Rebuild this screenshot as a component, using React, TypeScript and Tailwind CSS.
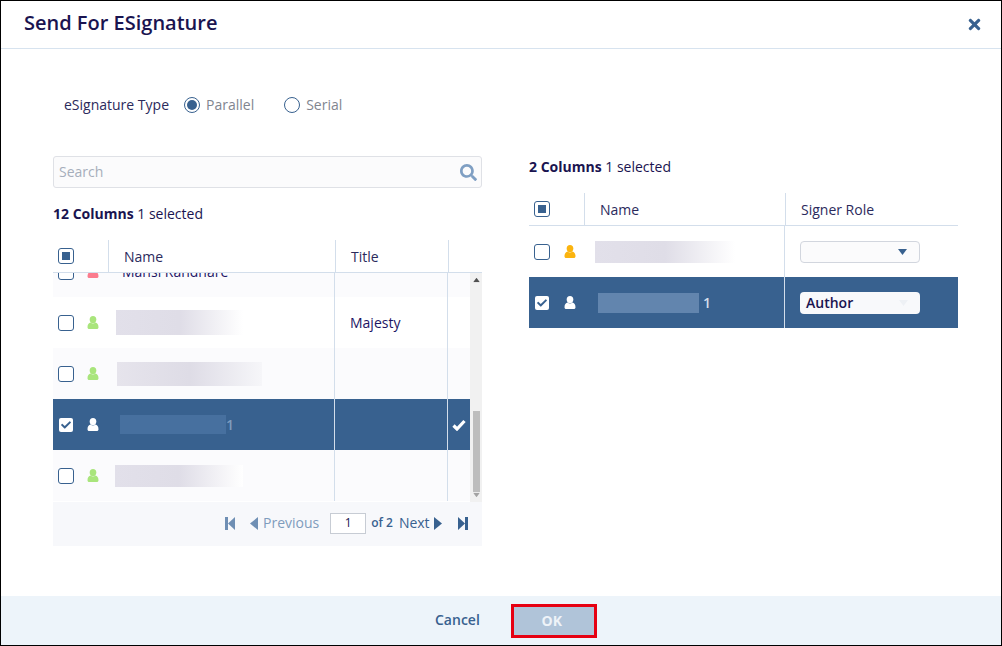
import { FaCheck, FaSearch, FaTimes } from 'react-icons/fa'

const User = ({ className }: { className: string }) => (
  <svg width="12" height="13" viewBox="0 0 12 13" className={`shrink-0 fill-current ${className}`}>
    <ellipse cx="6" cy="3.6" rx="3.3" ry="3.6" />
    <path d="M0.5 11.2C0.5 8.6 1.8 7 3.6 6.6 4.3 7.2 5.1 7.5 6 7.5S7.7 7.2 8.4 6.6C10.200 7 11.500 8.600 11.500 11.200 11.500 12.300 10.800 13 9.800 13H2.200C1.200 13 0.500 12.300 0.500 11.200Z" />
  </svg>
)

const Tri = ({ dir, className }: { dir: 'left' | 'right' | 'down' | 'up'; className: string }) => {
  if (dir === 'left' || dir === 'right') {
    return (
      <svg width="8" height="13" viewBox="0 0 8 13" className={`shrink-0 fill-current ${className}`}>
        <path d={dir === 'left' ? 'M8 0V13L0 6.500Z' : 'M0 0V13L8 6.500Z'} />
      </svg>
    )
  }
  return (
    <svg width="9" height="6" viewBox="0 0 9 6" className={`shrink-0 fill-current ${className}`}>
      <path d={dir === 'down' ? 'M0 0H9L4.500 6Z' : 'M0 6H9L4.500 0Z'} />
    </svg>
  )
}

const Step = ({ dir, className }: { dir: 'back' | 'fwd'; className: string }) => (
  <svg width="10" height="13" viewBox="0 0 10 13" className={`shrink-0 fill-current ${className}`}>
    <path d={dir === 'back' ? 'M0 0H3V13H0ZM10 0V13L3 6.500Z' : 'M10 0H7V13H10ZM0 0V13L7 6.500Z'} />
  </svg>
)

const Box = ({ state }: { state: 'off' | 'on' | 'mixed' }) => {
  if (state === 'on') {
    return (
      <span className="ml-px flex h-[14px] w-[14px] shrink-0 items-center justify-center rounded-[2px] bg-white text-[#38618f]">
        <FaCheck size={10} />
      </span>
    )
  }
  return (
    <span className="flex h-4 w-4 shrink-0 items-center justify-center rounded-[3px] border border-[#38618f] bg-white">
      {state === 'mixed' && <span className="h-2 w-2 bg-[#38618f]" />}
    </span>
  )
}

const Blur = ({ width, height, ml, tone }: { width: number; height: number; ml: number; tone: 'grey' | 'fade' | 'blue' | 'blue2' }) => {
  const bg = {
    grey: 'bg-gradient-to-r from-[#e6e4ec] via-[#dedce6] to-[#f6f6f9]',
    fade: 'bg-gradient-to-r from-[#e2e0ea] via-[#dfdde7] to-white',
    blue: 'bg-[#47709f]',
    blue2: 'bg-[#6285ae]',
  }[tone]
  return <div className={bg} style={{ width, height, marginLeft: ml }} />
}

const Row = ({
  bg,
  icon,
  box,
  children,
  title,
  mark,
}: {
  bg: string
  icon: string
  box: 'off' | 'on'
  children: React.ReactNode
  title?: string
  mark?: boolean
}) => (
  <div className={`flex h-[51px] ${bg}`}>
    <div className={`flex w-[55px] shrink-0 items-center pl-[5px] ${box === 'on' ? 'gap-[14px]' : 'gap-[13px]'}`}>
      <Box state={box} />
      <User className={icon} />
    </div>
    <div className="flex w-[226px] shrink-0 items-center overflow-hidden">{children}</div>
    <div className="flex w-[113px] shrink-0 items-center border-l border-[#d3deeb] pl-[15px] text-sm text-[#1c1464]">{title}</div>
    <div className="flex flex-1 items-center justify-center border-l border-[#d3deeb]">
      {mark && (
        <svg width="14" height="12" viewBox="0 0 14 12" fill="none" stroke="white" strokeWidth="3.200">
          <path d="M1.500 6.500 5 10 12.500 2" />
        </svg>
      )}
    </div>
  </div>
)

export default function App() {
  return (
    <div className="flex h-[646px] w-[1002px] flex-col border border-black bg-white font-['Open_Sans',sans-serif]">
      <header className="flex h-12 shrink-0 items-center justify-between border-b border-[#d7e3ef] pb-1 pl-[23px] pr-[18px]">
        <h1 className="text-xl font-semibold text-[#1a1450]">Send For ESignature</h1>
        <FaTimes size={17} className="mt-1 text-[#38618f]" />
      </header>

      <main className="flex-1">
        <div className="mt-[45px] flex h-[22px] items-center pl-[63px] text-sm">
          <span className="text-[#2b2a5c]">eSignature Type</span>
          <span className="ml-[15px] flex h-4 w-4 items-center justify-center rounded-full border border-[#38618f]">
            <span className="h-2.5 w-2.5 rounded-full bg-[#38618f]" />
          </span>
          <span className="ml-[6px] text-[#81858f]">Parallel</span>
          <span className="ml-[30px] h-4 w-4 rounded-full border border-[#38618f]" />
          <span className="ml-[6px] text-[#81858f]">Serial</span>
        </div>

        <div className="mt-10 flex pl-[52px]">
          <section className="w-[429px]">
            <div className="flex h-8 items-center justify-between rounded-[3px] border border-[#dfe1e6] bg-[#fbfbfc] pl-[5px] pr-1">
              <span className="text-sm text-[#a6aebb]">Search</span>
              <FaSearch size={17} className="text-[#7f9fc3]" />
            </div>
            <div className="mt-4 h-5 text-sm leading-5 text-[#1a1450]">
              <b>12 Columns</b> 1 selected
            </div>

            <div className="mt-4 flex h-[33px] border-b border-[#d3deeb] text-sm text-[#2b2a5c]">
              <div className="flex w-[55px] shrink-0 items-center pl-[5px]">
                <Box state="mixed" />
              </div>
              <div className="flex w-[227px] shrink-0 items-center border-l border-[#d3deeb] pl-[15px] pt-0.5">Name</div>
              <div className="flex w-[113px] shrink-0 items-center border-l border-[#d3deeb] pl-[15px] pt-0.5">Title</div>
              <div className="flex-1 border-l border-[#d3deeb]" />
            </div>

            <div className="flex h-[229px]">
              <div className="w-[417px] overflow-hidden">
                <div className="-mt-[27px]">
                  <Row bg="bg-[#fbfbfd]" icon="text-[#fb7c8e]" box="off">
                    <span className="ml-[14px] text-sm text-[#1c1464]">Mansi Randhare</span>
                  </Row>
                  <Row bg="bg-white" icon="text-[#a9e57c]" box="off" title="Majesty">
                    <Blur width={127} height={25} ml={8} tone="fade" />
                  </Row>
                  <Row bg="bg-[#fbfbfd]" icon="text-[#a9e57c]" box="off">
                    <Blur width={145} height={24} ml={9} tone="grey" />
                  </Row>
                  <Row bg="bg-[#38618f]" icon="text-white" box="on" mark>
                    <Blur width={106} height={19} ml={12} tone="blue" />
                    <span className="text-sm font-semibold text-[#7f9cbd]">1</span>
                  </Row>
                  <Row bg="bg-[#fbfbfd]" icon="text-[#a9e57c]" box="off">
                    <Blur width={128} height={22} ml={7} tone="fade" />
                  </Row>
                </div>
              </div>
              <div className="flex flex-1 flex-col items-center justify-between bg-[#f1f1f1] py-1">
                <Tri dir="up" className="scale-75 text-[#505050]" />
                <div className="mt-[128px] w-[7px] flex-1 bg-[#bdbdbd]" />
                <Tri dir="down" className="scale-75 text-[#a3a3a3]" />
              </div>
            </div>

            <div className="flex h-[44px] items-center bg-[#f7f8fb] pb-0.5 text-sm">
              <Step dir="back" className="ml-[172px] text-[#6f8fb4]" />
              <Tri dir="left" className="ml-[15px] text-[#6f8fb4]" />
              <span className="ml-[5px] text-[#7f9cbd]">Previous</span>
              <span className="ml-[11px] flex h-[21px] w-9 items-center justify-center border border-[#c7ccd4] bg-white text-xs text-[#1a1450]">1</span>
              <span className="ml-[5px] text-xs font-semibold text-[#38618f]">of 2</span>
              <span className="ml-[6px] text-[#38618f]">Next</span>
              <Tri dir="right" className="ml-1 text-[#38618f]" />
              <Step dir="fwd" className="ml-4 text-[#38618f]" />
            </div>
          </section>

          <section className="ml-[47px] w-[429px]">
            <div className="h-[21px] pt-px text-sm leading-5 text-[#1a1450]">
              <b>2 Columns</b> 1 selected
            </div>
            <div className="mt-4 flex h-[33px] border-b border-[#d3deeb] text-sm text-[#2b2a5c]">
              <div className="flex w-[55px] shrink-0 items-center pl-[5px]">
                <Box state="mixed" />
              </div>
              <div className="flex w-[201px] shrink-0 items-center border-l border-[#d3deeb] pl-[15px] pt-0.5">Name</div>
              <div className="flex flex-1 items-center border-l border-[#d3deeb] pl-[15px] pt-0.5">Signer Role</div>
            </div>
            <div className="flex h-[51px] bg-white">
              <div className="flex w-[55px] shrink-0 items-center gap-[14px] pl-[5px]">
                <Box state="off" />
                <User className="text-[#fbb40f]" />
              </div>
              <div className="flex w-[200px] shrink-0 items-center overflow-hidden">
                <Blur width={140} height={22} ml={11} tone="fade" />
              </div>
              <div className="flex flex-1 items-center border-l border-[#d3deeb] pl-[15px]">
                <div className="flex h-[22px] w-[120px] items-center justify-end rounded-[4px] border border-[#d2d6de] bg-[#fbfbfc] pr-3">
                  <Tri dir="down" className="text-[#38618f]" />
                </div>
              </div>
            </div>
            <div className="flex h-[51px] bg-[#38618f]">
              <div className="flex w-[55px] shrink-0 items-center gap-[15px] pl-[5px]">
                <Box state="on" />
                <User className="text-white" />
              </div>
              <div className="flex w-[200px] shrink-0 items-center overflow-hidden">
                <Blur width={101} height={20} ml={14} tone="blue2" />
                <span className="ml-1 text-sm font-semibold text-[#d4deea]">1</span>
              </div>
              <div className="flex flex-1 items-center border-l border-[#d3deeb] pl-[15px]">
                <div className="flex h-[22px] w-[120px] items-center justify-between rounded-[4px] bg-[#f8f9fb] pl-[6px] pr-3 text-sm font-semibold text-[#1a1450]">
                  Author
                  <Tri dir="down" className="text-[#eef1f5]" />
                </div>
              </div>
            </div>
          </section>
        </div>
      </main>

      <footer className="flex h-[49px] shrink-0 items-center bg-[#edf4fa] pl-[434px]">
        <span className="mb-0.5 text-sm font-semibold text-[#38618f]">Cancel</span>
        <button className="ml-[31px] flex h-[34px] w-[86px] items-center justify-center border-[3px] border-[#e60012] bg-[#b0c4d9] pr-1 text-sm font-bold text-[#eef3f8]">OK</button>
      </footer>
    </div>
  )
}
